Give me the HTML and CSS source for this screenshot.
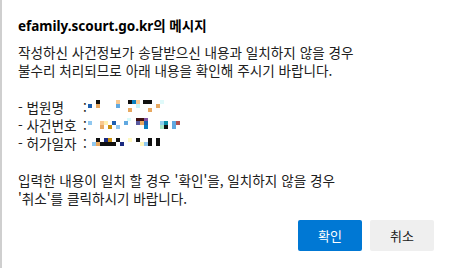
FILE: index.html
```html
<!DOCTYPE html>
<html lang="ko">
<head>
  <meta charset="UTF-8">
  <meta name="viewport" content="width=device-width, initial-scale=1.0">
  <title>efamily.scourt.go.kr의 메시지</title>
  <link rel="stylesheet" href="styles.css">
</head>
<body>
  <div class="dialog">
    <h1 class="dialog-title">efamily.scourt.go.kr의 메시지</h1>

    <div class="message">
      <p>작성하신 사건정보가 송달받으신 내용과 일치하지 않을 경우</p>
      <p>불수리 처리되므로 아래 내용을 확인해 주시기 바랍니다.</p>

      <div class="fields">
        <!-- 법원명 -->
        <p class="field">
          <span class="label">- 법원명</span><span class="colon">:</span>
          <svg class="mosaic" width="90" height="14" viewBox="0 0 90 14">
            <rect x="0" y="4" width="4" height="4" fill="#1d5fb0"/>
            <rect x="8" y="0" width="4" height="4" fill="#111"/>
            <rect x="8" y="4" width="4" height="4" fill="#e8a860"/>
            <rect x="28" y="0" width="4" height="4" fill="#f8c890"/>
            <rect x="28" y="4" width="4" height="4" fill="#60a8e0"/>
            <rect x="40" y="8" width="4" height="4" fill="#e8a860"/>
            <rect x="40" y="0" width="4" height="4" fill="#111"/>
            <rect x="44" y="0" width="4" height="4" fill="#0a80c0"/>
            <rect x="48" y="0" width="4" height="4" fill="#f8c890"/>
            <rect x="48" y="4" width="4" height="4" fill="#c8f4f8"/>
            <rect x="55" y="0" width="9" height="4" fill="#111"/>
            <rect x="60" y="8" width="4" height="4" fill="#e8a860"/>
            <rect x="68" y="4" width="4" height="4" fill="#e8a860"/>
            <rect x="72" y="0" width="4" height="4" fill="#e0fafa"/>
          </svg>
        </p>
        <!-- 사건번호 -->
        <p class="field">
          <span class="label">- 사건번호</span><span class="colon">:</span>
          <svg class="mosaic" width="96" height="14" viewBox="0 0 96 14">
            <rect x="0" y="3" width="4" height="4" fill="#90c8f0"/>
            <rect x="12" y="3" width="4" height="4" fill="#f8c890"/>
            <rect x="12" y="7" width="4" height="4" fill="#e8a860"/>
            <rect x="16" y="3" width="4" height="4" fill="#fff0b0"/>
            <rect x="20" y="7" width="4" height="4" fill="#c89010"/>
            <rect x="24" y="3" width="4" height="4" fill="#1d5fb0"/>
            <rect x="28" y="7" width="4" height="4" fill="#90c8f0"/>
            <rect x="36" y="3" width="4" height="4" fill="#60a8e0"/>
            <rect x="39" y="0" width="4" height="3" fill="#d8fafa"/>
            <rect x="48" y="0" width="8" height="3" fill="#401010"/>
            <rect x="56" y="0" width="4" height="3" fill="#8050a0"/>
            <rect x="48" y="3" width="4" height="4" fill="#5a5aa0"/>
            <rect x="52" y="3" width="4" height="4" fill="#e8a860"/>
            <rect x="56" y="3" width="4" height="4" fill="#1d5fb0"/>
            <rect x="56" y="7" width="4" height="4" fill="#0a80c0"/>
            <rect x="72" y="3" width="4" height="4" fill="#90d0f0"/>
            <rect x="72" y="7" width="4" height="4" fill="#a8e8c8"/>
            <rect x="76" y="3" width="4" height="4" fill="#0a90a8"/>
            <rect x="76" y="7" width="4" height="4" fill="#111"/>
            <rect x="84" y="3" width="4" height="8" fill="#60a8e0"/>
            <rect x="88" y="3" width="4" height="4" fill="#b05050"/>
          </svg>
        </p>
        <!-- 허가일자 -->
        <p class="field">
          <span class="label">- 허가일자</span><span class="colon">:</span>
          <svg class="mosaic" width="80" height="14" viewBox="0 0 80 14">
            <rect x="8" y="1" width="4" height="4" fill="#111"/>
            <rect x="4" y="5" width="4" height="4" fill="#90c8f0"/>
            <rect x="8" y="5" width="4" height="4" fill="#e8a860"/>
            <rect x="12" y="5" width="8" height="4" fill="#111"/>
            <rect x="16" y="1" width="4" height="4" fill="#1a2a80"/>
            <rect x="20" y="1" width="4" height="4" fill="#c89010"/>
            <rect x="20" y="5" width="8" height="4" fill="#111"/>
            <rect x="28" y="1" width="4" height="4" fill="#111"/>
            <rect x="32" y="5" width="4" height="4" fill="#1a2a80"/>
            <rect x="40" y="1" width="4" height="4" fill="#fff8c0"/>
            <rect x="48" y="1" width="4" height="4" fill="#111"/>
            <rect x="52" y="5" width="4" height="4" fill="#fff8c0"/>
            <rect x="56" y="5" width="4" height="4" fill="#90c8f0"/>
            <rect x="60" y="1" width="4" height="4" fill="#111"/>
            <rect x="60" y="5" width="4" height="4" fill="#111"/>
            <rect x="68" y="1" width="4" height="4" fill="#111"/>
            <rect x="68" y="5" width="4" height="4" fill="#111"/>
          </svg>
        </p>
      </div>

      <p>입력한 내용이 일치 할 경우 '확인'을, 일치하지 않을 경우</p>
      <p>'취소'를 클릭하시기 바랍니다.</p>
    </div>

    <div class="actions">
      <button type="button" class="btn btn-primary">확인</button>
      <button type="button" class="btn">취소</button>
    </div>
  </div>
</body>
</html>
```

FILE: styles.css
```css
/* General Styling */
html {
  font-family: "Noto Sans CJK KR", "Noto Sans", sans-serif;
}
body {
  margin: 0;
  background: #fff;
}
.dialog {
  height: 268px;
  box-sizing: border-box;
  padding: 16px 15px 16px 16px;
  border-left: 2px solid #cfcfcf;
  color: #202020;
}
.dialog-title {
  margin: 0;
  font-family: "Noto Sans", "Noto Sans CJK KR", sans-serif;
  font-size: 13.5px;
  font-weight: 700;
  line-height: 20px;
  color: #000;
}
.message {
  margin-top: 7px;
  font-size: 13.6px;
  line-height: 18.3px;
}
.message p {
  margin: 0;
}
.fields {
  margin: 18.3px 0;
}
.field {
  display: flex;
  align-items: center;
}
.field .label {
  display: inline-block;
  width: 65px;
}
.field .colon {
  margin-right: 1px;
}
.mosaic {
  display: block;
}
.actions {
  display: flex;
  justify-content: flex-end;
  gap: 8px;
  margin-top: 12px;
}
.btn {
  width: 64px;
  height: 31px;
  border: none;
  border-radius: 2px;
  background: #efefef;
  color: #202020;
  font-family: inherit;
  font-size: 13px;
  cursor: pointer;
}
.btn-primary {
  background: #0078d4;
  color: #fff;
}
```
